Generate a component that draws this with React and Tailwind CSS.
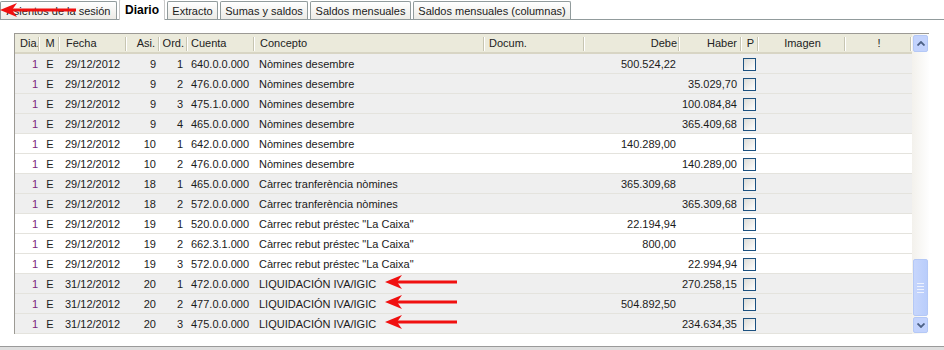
import React from "react";

const tabs = [
  { label: "Asientos de la sesión", w: "w-[117px]" },
  { label: "Diario", w: "w-[46px]", active: true },
  { label: "Extracto", w: "w-[51px]" },
  { label: "Sumas y saldos", w: "w-[88px]" },
  { label: "Saldos mensuales", w: "w-[101px]" },
  { label: "Saldos mensuales (columnas)", w: "w-[158px]" },
];

const rows = [
  [9, 1, "640.0.0.000", "Nòmines desembre", "500.524,22", ""],
  [9, 2, "476.0.0.000", "Nòmines desembre", "", "35.029,70"],
  [9, 3, "475.1.0.000", "Nòmines desembre", "", "100.084,84"],
  [9, 4, "465.0.0.000", "Nòmines desembre", "", "365.409,68"],
  [10, 1, "642.0.0.000", "Nòmines desembre", "140.289,00", ""],
  [10, 2, "476.0.0.000", "Nòmines desembre", "", "140.289,00"],
  [18, 1, "465.0.0.000", "Càrrec tranferència nòmines", "365.309,68", ""],
  [18, 2, "572.0.0.000", "Càrrec tranferència nòmines", "", "365.309,68"],
  [19, 1, "520.0.0.000", 'Càrrec rebut préstec "La Caixa"', "22.194,94", ""],
  [19, 2, "662.3.1.000", 'Càrrec rebut préstec "La Caixa"', "800,00", ""],
  [19, 3, "572.0.0.000", 'Càrrec rebut préstec "La Caixa"', "", "22.994,94"],
  [20, 1, "472.0.0.000", "LIQUIDACIÓN IVA/IGIC", "", "270.258,15"],
  [20, 2, "477.0.0.000", "LIQUIDACIÓN IVA/IGIC", "504.892,50", ""],
  [20, 3, "475.0.0.000", "LIQUIDACIÓN IVA/IGIC", "", "234.634,35"],
];

const RedArrow = () => (
  <svg width="72" height="16" viewBox="0 0 72 16">
    <rect x="10" y="6.5" width="62" height="3" fill="#f01010" />
    <path d="M0 8 L17 1 L12 8 L17 15 Z" fill="#f01010" />
  </svg>
);

const HeaderCell = ({ w, className = "", children }) => (
  <div className={`${w} h-full shrink-0 whitespace-nowrap flex items-center pt-px relative ${className}`}>
    {children}
    <div className="absolute right-0 top-[3px] h-[14px] w-[2px] border-l border-[#c7c5b2] border-r border-r-white" />
  </div>
);

const Checkbox = () => (
  <div className="w-[13px] h-[13px] border border-[#1c5180] bg-linear-to-br from-[#dcdcd7] to-white" />
);

const Scrollbar = () => (
  <div className="w-[17px] h-[300px] flex flex-col bg-linear-to-r from-[#f3f1ec] to-[#fefefe]">
    <div className="h-[17px] m-px rounded-[2px] border border-[#b4c8f6] bg-[#c3d3fd] flex items-center justify-center">
      <svg width="8" height="5" viewBox="0 0 8 5">
        <path d="M0.5 4.5 L4 1 L7.5 4.5" stroke="#4d6185" strokeWidth="1.8" fill="none" />
      </svg>
    </div>
    <div className="flex-1" />
    <div className="h-[57px] mx-px rounded-[2px] border border-[#b4c8f6] bg-linear-to-r from-[#c7d6fc] to-[#b9cdfb] flex flex-col items-center justify-center gap-[2px]">
      <div className="w-[7px] h-px bg-[#eef2fd]" />
      <div className="w-[7px] h-px bg-[#eef2fd]" />
      <div className="w-[7px] h-px bg-[#eef2fd]" />
      <div className="w-[7px] h-px bg-[#eef2fd]" />
    </div>
    <div className="h-[16px] m-px rounded-[2px] border border-[#b4c8f6] bg-[#c3d3fd] flex items-center justify-center">
      <svg width="8" height="5" viewBox="0 0 8 5">
        <path d="M0.5 0.5 L4 4 L7.5 0.5" stroke="#4d6185" strokeWidth="1.8" fill="none" />
      </svg>
    </div>
  </div>
);

export default function App() {
  return (
    <div className="w-[944px] h-[350px] bg-white relative overflow-hidden font-['Liberation_Sans',Arial,sans-serif] text-[11px] text-[#1b1b1b]">
      {/* Tabs */}
      <div className="h-[20px] flex items-end gap-[2px] border-b border-[#919b9c]">
        {tabs.map((t) =>
          t.active ? (
            <div
              key={t.label}
              className={`${t.w} h-[21px] -mb-px bg-white border-x border-t border-[#c8c8c8] rounded-t-[2px] flex items-center justify-center text-[12px] font-bold text-black`}
            >
              {t.label}
            </div>
          ) : (
            <div
              key={t.label}
              className={`${t.w} h-[18px] border-x border-t border-[#919b9c] rounded-t-[2px] bg-linear-to-b from-white to-[#ecebe6] flex items-center justify-center pt-px`}
            >
              {t.label}
            </div>
          )
        )}
      </div>
      <div className="absolute left-0 top-[2px]">
        <svg width="76" height="16" viewBox="0 0 76 16">
          <rect x="10" y="6.5" width="66" height="3" fill="#f01010" />
          <path d="M0 8 L17 1 L12 8 L17 15 Z" fill="#f01010" />
        </svg>
      </div>

      {/* Grid */}
      <div className="ml-[14px] mt-[13px] w-[915px] flex border-l border-t border-[#9c9a94]">
        <div className="w-[897px]">
          <div className="h-[20px] flex bg-[#ebeadb] border-b-2 border-[#d8d5c4] text-[#222]">
            <HeaderCell w="w-[25px]" className="pl-[5px]">Dia.</HeaderCell>
            <HeaderCell w="w-[20px]" className="justify-center">M</HeaderCell>
            <HeaderCell w="w-[67px]" className="pl-[6px]">Fecha</HeaderCell>
            <HeaderCell w="w-[33px]" className="justify-end pr-[5px]">Asi.</HeaderCell>
            <HeaderCell w="w-[28px]" className="justify-end pr-[4px]">Ord.</HeaderCell>
            <HeaderCell w="w-[67px]" className="pl-[3px]">Cuenta</HeaderCell>
            <HeaderCell w="w-[230px]" className="pl-[5px]">Concepto</HeaderCell>
            <HeaderCell w="w-[100px]" className="pl-[4px]">Docum.</HeaderCell>
            <HeaderCell w="w-[95px]" className="justify-end pr-[3px]">Debe</HeaderCell>
            <HeaderCell w="w-[62px]" className="justify-end pr-[5px]">Haber</HeaderCell>
            <HeaderCell w="w-[17px]" className="justify-center">P</HeaderCell>
            <HeaderCell w="w-[87px]" className="justify-center">Imagen</HeaderCell>
            <HeaderCell w="w-[66px]" className="justify-center">!</HeaderCell>
          </div>
          {rows.map(([asi, ord, cuenta, concepto, debe, haber], i) => {
            const gray = asi === 9 || asi === 18 || asi === 20;
            const liq = asi === 20;
            return (
              <div
                key={i}
                className={`h-[20px] flex items-center pt-px border-b border-[#e4e3dd] ${gray ? "bg-[#efefef]" : "bg-white"}`}
              >
                <div className="w-[25px] text-right pr-[2px] text-[#7b1f7b]">1</div>
                <div className="w-[20px] text-center">E</div>
                <div className="w-[67px] pl-[5px]">{asi === 20 ? "31/12/2012" : "29/12/2012"}</div>
                <div className="w-[33px] text-right pr-[4px]">{asi}</div>
                <div className="w-[28px] text-right pr-[5px]">{ord}</div>
                <div className="w-[67px] pl-[3px]">{cuenta}</div>
                <div className="w-[230px] pl-[4px] relative whitespace-nowrap">
                  {concepto}
                  {liq && (
                    <div className="absolute left-[130px] -top-[2px]">
                      <RedArrow />
                    </div>
                  )}
                </div>
                <div className="w-[100px]" />
                <div className="w-[95px] text-right pr-[4px]">{debe}</div>
                <div className="w-[62px] text-right pr-[5px]">{haber}</div>
                <div className="w-[17px] pl-px flex items-center">
                  <Checkbox />
                </div>
                <div className="w-[87px]" />
                <div className="w-[66px]" />
              </div>
            );
          })}
        </div>
        <Scrollbar />
      </div>

      {/* Bottom frame */}
      <div className="mt-[12px] border-t border-[#9a9a9a] h-[6px] bg-[#dedede]" />
    </div>
  );
}
